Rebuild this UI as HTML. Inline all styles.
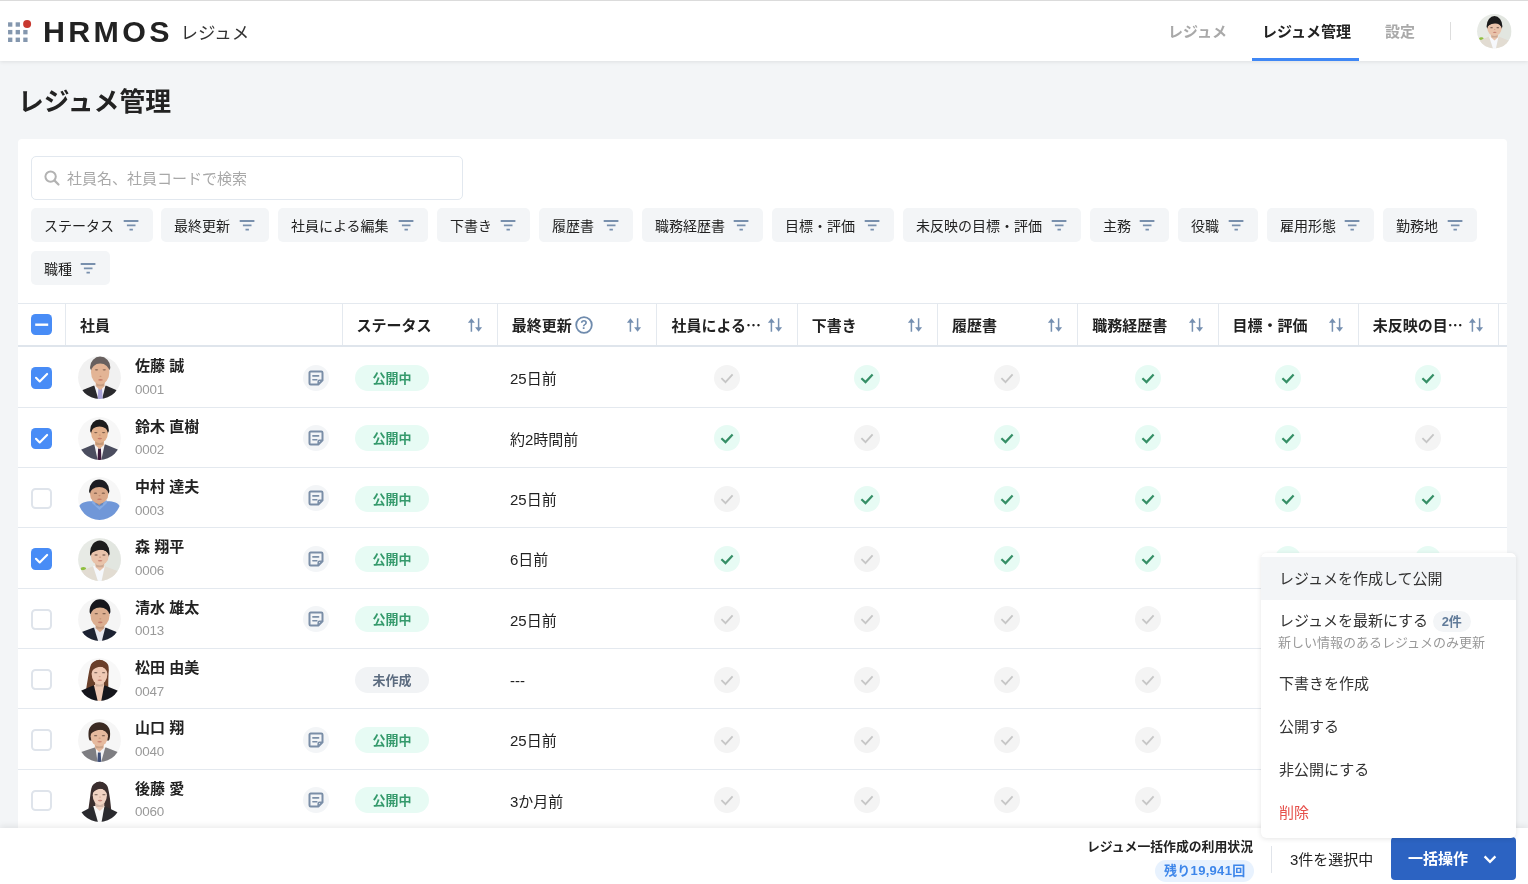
<!DOCTYPE html>
<html lang="ja"><head><meta charset="utf-8"><title>レジュメ管理</title>
<style>
*{box-sizing:border-box;margin:0;padding:0}
html,body{width:1528px;height:884px;overflow:hidden}
body{background:#f3f5f7;font-family:"Liberation Sans","Noto Sans CJK JP",sans-serif;color:#222;position:relative;font-size:15px}
.abs{position:absolute}
#hdr{position:absolute;left:0;top:0;width:1528px;height:61px;background:#fff;border-top:1px solid #dbdbdb;box-shadow:0 1px 4px rgba(0,0,0,.09)}
#logo{position:absolute;left:43.1px;top:12.4px;font-size:30.4px;font-weight:700;letter-spacing:3.3px;color:#222;line-height:36px}
#sub{position:absolute;left:180.5px;top:18.8px;font-size:17.5px;line-height:26px;color:#333}
.nav{position:absolute;top:19.4px;font-size:15px;line-height:24px;font-weight:700;color:#a9a9a9;white-space:nowrap}
.nav.on{color:#222;font-weight:700}
#ul{position:absolute;left:1252px;top:57px;width:107px;height:3px;background:#3f87f5}
#vd{position:absolute;left:1450px;top:21px;width:1px;height:18px;background:#ddd}
h1{position:absolute;left:18px;top:83.6px;font-size:25.8px;line-height:36px;font-weight:700;color:#222;white-space:nowrap}
#card{position:absolute;left:18px;top:139px;width:1489px;height:760px;background:#fff;border-radius:4px}
#search{position:absolute;left:13px;top:17.3px;width:432px;height:43.4px;border:1px solid #e2e8ef;border-radius:5px;background:#fff}
#search span{position:absolute;left:35px;top:9.7px;font-size:15px;line-height:24px;color:#a8a8a8;white-space:nowrap}
#search svg{position:absolute;left:11.3px;top:12.2px}
.chip{position:absolute;height:34.4px;border-radius:5px;background:#f3f5f7;font-size:14px;line-height:36px;color:#222;white-space:nowrap;padding-left:13px}
.chip .fi{position:absolute;right:12.9px;top:8px}
#thead{position:absolute;left:0;top:164px;width:1489px;height:44px;border-top:1px solid #e4e9ef;border-bottom:2px solid #dfe5ec}
.th{position:absolute;top:0;height:41px;border-right:1px solid #e4e9ef;font-weight:700;font-size:15px;line-height:43px;padding-left:14px;white-space:nowrap}
.th .so{position:absolute;right:14px;top:13px}
.row{position:absolute;left:0;width:1489px;height:60.35px;border-bottom:1px solid #e4e9ef}
.cb{position:absolute;left:13px;width:21.4px;height:21.4px;border-radius:4.5px}
.cb.on{background:#488cf6}
.cb.off{background:#fff;border:2px solid #dfe4eb}
.cb svg{position:absolute;left:0;top:0}
.av{position:absolute;left:60.4px;top:9.3px}
.nm{position:absolute;left:117px;top:8px;font-size:15px;font-weight:700;line-height:22px;white-space:nowrap;color:#222}
.cd{position:absolute;left:117px;top:33.7px;font-size:13.4px;letter-spacing:-0.2px;line-height:18px;color:#999}
.nb{position:absolute;left:284.7px;top:17.5px;width:26px;height:26px;border-radius:13px;background:#f3f5f7}
.nb svg{position:absolute;left:4px;top:4px}
.st{position:absolute;left:337px;top:17.7px;width:74px;height:26px;border-radius:13px;font-size:13px;font-weight:700;line-height:27.6px;text-align:center}
.st.g{background:#e7fbf4;color:#359a6c}
.st.n{background:#f1f3f5;color:#5b6b7f}
.lu{position:absolute;left:492px;top:20px;font-size:15px;line-height:24px;white-space:nowrap;color:#222}
.ck{position:absolute;top:17.7px;width:26px;height:26px;border-radius:13px}
.ck svg{position:absolute;left:0;top:0}
.ck.g{background:#e7fbf4}
.ck.x{background:#f4f4f4}
#bar{position:absolute;left:0;top:828px;width:1528px;height:56px;background:#fff;box-shadow:0 -2px 6px rgba(0,0,0,.08)}
#dd{position:absolute;left:1261px;top:552.5px;width:255px;height:285px;background:#fff;border-radius:5px;box-shadow:0 1px 5px rgba(0,0,0,.10),0 0 1px rgba(0,0,0,.05)}
.mi{position:absolute;left:0;width:255px;height:43px;font-size:15px;line-height:44.4px;padding-left:18px;color:#333;white-space:nowrap}
#root{position:absolute;left:0;top:0;width:1528px;height:884px;will-change:transform}
</style></head><body><div id="root">

<div id="hdr">
<svg class="abs" style="left:7px;top:17px" width="26" height="26" viewBox="0 0 26 26"><rect x="1.05" y="4.30" width="4.3" height="4.4" fill="#8497ae"/><rect x="8.65" y="4.30" width="4.3" height="4.4" fill="#8497ae"/><rect x="1.05" y="11.95" width="4.3" height="4.4" fill="#8497ae"/><rect x="8.65" y="11.95" width="4.3" height="4.4" fill="#8497ae"/><rect x="16.25" y="11.95" width="4.3" height="4.4" fill="#8497ae"/><rect x="1.05" y="19.60" width="4.3" height="4.4" fill="#8497ae"/><rect x="8.65" y="19.60" width="4.3" height="4.4" fill="#8497ae"/><rect x="16.25" y="19.60" width="4.3" height="4.4" fill="#8497ae"/><circle cx="20.1" cy="6.05" r="4" fill="#c8382f"/></svg>
<div id="logo">HRMOS</div><div id="sub">レジュメ</div>
<div class="nav" style="left:1168px">レジュメ</div><div class="nav on" style="left:1262px">レジュメ管理</div><div class="nav" style="left:1385px">設定</div>
<div id="ul"></div><div id="vd"></div>
<svg class="abs" style="left:1477px;top:13px" width="34.5" height="34.5" viewBox="0 0 43 43"><defs><clipPath id="cu"><circle cx="21.5" cy="21.5" r="21.4"/></clipPath><filter id="bu" x="-10%" y="-10%" width="120%" height="120%"><feGaussianBlur stdDeviation="0.55"/></filter></defs><g clip-path="url(#cu)"><rect width="43" height="43" fill="#e7eae5"/><g filter="url(#bu)"><ellipse cx="5.4" cy="30.8" rx="2.8" ry="1.7" fill="#8fbf3f"/><rect x="26" y="0" width="17" height="43" fill="#dfe3de" opacity=".6"/><path d="M-2.5 37.5 L3.5 33 L14.2 28.5 L27.6 28.5 L39.5 33 L45.5 37.5 L44 44 L-1 44 Z" fill="#e2dcd2"/><path d="M15 28.0 L26.8 28.0 L23.400000000000002 44 L20.2 44 Z" fill="#f6f8fc"/><path d="M17.200000000000003 21.4 L26.4 21.4 L26.200000000000003 29.0 L21.8 33.0 L17.4 29.0 Z" fill="#e9c3aa"/><path d="M17.200000000000003 24.4 L26.4 24.4 L25.2 29.2 L18.400000000000002 29.2 Z" fill="#000" opacity=".13"/><path d="M13.30 18.5 C11.80 16.5 12.00 16.0 12.00 15.0 A9.8 12.60 0 0 1 31.60 15.0 C31.60 16.0 31.80 16.5 30.30 18.5 Z" fill="#1c1c1c"/><path d="M12.9 17.86 A8.9 6.36 0 0 1 30.700000000000003 17.86 A8.9 9.54 0 0 1 12.9 17.86 Z" fill="#e9c3aa"/><path d="M12.4 15.5 C13.4 7.5 29.200000000000003 6.5 31.200000000000003 16.5 C28.200000000000003 11.0 21.8 9.5 12.4 15.5 Z" fill="#1c1c1c"/><ellipse cx="18.1" cy="17.0" rx="1.7" ry="0.65" fill="#2a1a14" opacity=".55"/><ellipse cx="25.9" cy="17.0" rx="1.7" ry="0.65" fill="#2a1a14" opacity=".55"/><ellipse cx="22.1" cy="22.799999999999997" rx="2.3" ry="0.8" fill="#b0564e" opacity=".6"/><ellipse cx="22.1" cy="19.2" rx="1.1" ry="0.6" fill="#9a5a40" opacity=".35"/></g></g></svg>
</div>
<h1>レジュメ管理</h1>
<div id="card">
<div id="search"><svg width="18" height="18" viewBox="0 0 18 18"><circle cx="7.6" cy="7.6" r="5.2" fill="none" stroke="#b2b2b2" stroke-width="2"/><path d="M11.6 11.6l3.9 3.9" stroke="#b2b2b2" stroke-width="2.2" stroke-linecap="round"/></svg><span>社員名、社員コードで検索</span></div>
<div class="chip" style="left:13px;top:69px;width:122px">ステータス<svg class="fi" viewBox="0 0 18 18" width="18" height="18"><path d="M1.7 5h14.7M4.9 9.4h8.6M7.5 13.6h3.4" fill="none" stroke="#7990ad" stroke-width="1.8"/></svg></div>
<div class="chip" style="left:143px;top:69px;width:108px">最終更新<svg class="fi" viewBox="0 0 18 18" width="18" height="18"><path d="M1.7 5h14.7M4.9 9.4h8.6M7.5 13.6h3.4" fill="none" stroke="#7990ad" stroke-width="1.8"/></svg></div>
<div class="chip" style="left:260px;top:69px;width:150px">社員による編集<svg class="fi" viewBox="0 0 18 18" width="18" height="18"><path d="M1.7 5h14.7M4.9 9.4h8.6M7.5 13.6h3.4" fill="none" stroke="#7990ad" stroke-width="1.8"/></svg></div>
<div class="chip" style="left:419px;top:69px;width:93px">下書き<svg class="fi" viewBox="0 0 18 18" width="18" height="18"><path d="M1.7 5h14.7M4.9 9.4h8.6M7.5 13.6h3.4" fill="none" stroke="#7990ad" stroke-width="1.8"/></svg></div>
<div class="chip" style="left:521px;top:69px;width:94px">履歴書<svg class="fi" viewBox="0 0 18 18" width="18" height="18"><path d="M1.7 5h14.7M4.9 9.4h8.6M7.5 13.6h3.4" fill="none" stroke="#7990ad" stroke-width="1.8"/></svg></div>
<div class="chip" style="left:624px;top:69px;width:121px">職務経歴書<svg class="fi" viewBox="0 0 18 18" width="18" height="18"><path d="M1.7 5h14.7M4.9 9.4h8.6M7.5 13.6h3.4" fill="none" stroke="#7990ad" stroke-width="1.8"/></svg></div>
<div class="chip" style="left:754px;top:69px;width:122px">目標・評価<svg class="fi" viewBox="0 0 18 18" width="18" height="18"><path d="M1.7 5h14.7M4.9 9.4h8.6M7.5 13.6h3.4" fill="none" stroke="#7990ad" stroke-width="1.8"/></svg></div>
<div class="chip" style="left:885px;top:69px;width:178px">未反映の目標・評価<svg class="fi" viewBox="0 0 18 18" width="18" height="18"><path d="M1.7 5h14.7M4.9 9.4h8.6M7.5 13.6h3.4" fill="none" stroke="#7990ad" stroke-width="1.8"/></svg></div>
<div class="chip" style="left:1072px;top:69px;width:79px">主務<svg class="fi" viewBox="0 0 18 18" width="18" height="18"><path d="M1.7 5h14.7M4.9 9.4h8.6M7.5 13.6h3.4" fill="none" stroke="#7990ad" stroke-width="1.8"/></svg></div>
<div class="chip" style="left:1160px;top:69px;width:80px">役職<svg class="fi" viewBox="0 0 18 18" width="18" height="18"><path d="M1.7 5h14.7M4.9 9.4h8.6M7.5 13.6h3.4" fill="none" stroke="#7990ad" stroke-width="1.8"/></svg></div>
<div class="chip" style="left:1249px;top:69px;width:107px">雇用形態<svg class="fi" viewBox="0 0 18 18" width="18" height="18"><path d="M1.7 5h14.7M4.9 9.4h8.6M7.5 13.6h3.4" fill="none" stroke="#7990ad" stroke-width="1.8"/></svg></div>
<div class="chip" style="left:1365px;top:69px;width:94px">勤務地<svg class="fi" viewBox="0 0 18 18" width="18" height="18"><path d="M1.7 5h14.7M4.9 9.4h8.6M7.5 13.6h3.4" fill="none" stroke="#7990ad" stroke-width="1.8"/></svg></div>
<div class="chip" style="left:13px;top:112px;width:79px">職種<svg class="fi" viewBox="0 0 18 18" width="18" height="18"><path d="M1.7 5h14.7M4.9 9.4h8.6M7.5 13.6h3.4" fill="none" stroke="#7990ad" stroke-width="1.8"/></svg></div>
<div id="thead">
<div class="th" style="left:0px;width:48px"><div class="cb on" style="top:10px"><svg width="21" height="21" viewBox="0 0 21 21"><path d="M4.2 10.7h13" stroke="#fff" stroke-width="2.4"/></svg></div></div>
<div class="th" style="left:48px;width:276.5px">社員</div>
<div class="th" style="left:324.5px;width:155.2px">ステータス<svg class="so" viewBox="0 0 16 16" width="16" height="16"><path d="M4.4 14.7V3.4M11.6 1.3v11.3" fill="none" stroke="#7690b1" stroke-width="1.5"/><path d="M0.9 5.8l3.5-4.5 3.5 4.5zM8.1 10.2l3.5 4.5 3.5-4.5z" fill="#7690b1"/></svg></div>
<div class="th" style="left:479.7px;width:159.8px">最終更新<svg class="abs" style="left:77.5px;top:11.6px" width="18" height="18" viewBox="0 0 18 18"><circle cx="9" cy="9" r="7.8" fill="none" stroke="#6f8bad" stroke-width="1.8"/><text x="9" y="13.2" text-anchor="middle" font-family="Liberation Sans, sans-serif" font-size="12" font-weight="700" fill="#6f8bad">?</text></svg><svg class="so" viewBox="0 0 16 16" width="16" height="16"><path d="M4.4 14.7V3.4M11.6 1.3v11.3" fill="none" stroke="#7690b1" stroke-width="1.5"/><path d="M0.9 5.8l3.5-4.5 3.5 4.5zM8.1 10.2l3.5 4.5 3.5-4.5z" fill="#7690b1"/></svg></div>
<div class="th" style="left:639.5px;width:140.25px">社員による⋯<svg class="so" viewBox="0 0 16 16" width="16" height="16"><path d="M4.4 14.7V3.4M11.6 1.3v11.3" fill="none" stroke="#7690b1" stroke-width="1.5"/><path d="M0.9 5.8l3.5-4.5 3.5 4.5zM8.1 10.2l3.5 4.5 3.5-4.5z" fill="#7690b1"/></svg></div>
<div class="th" style="left:779.75px;width:140.25px">下書き<svg class="so" viewBox="0 0 16 16" width="16" height="16"><path d="M4.4 14.7V3.4M11.6 1.3v11.3" fill="none" stroke="#7690b1" stroke-width="1.5"/><path d="M0.9 5.8l3.5-4.5 3.5 4.5zM8.1 10.2l3.5 4.5 3.5-4.5z" fill="#7690b1"/></svg></div>
<div class="th" style="left:920.0px;width:140.25px">履歴書<svg class="so" viewBox="0 0 16 16" width="16" height="16"><path d="M4.4 14.7V3.4M11.6 1.3v11.3" fill="none" stroke="#7690b1" stroke-width="1.5"/><path d="M0.9 5.8l3.5-4.5 3.5 4.5zM8.1 10.2l3.5 4.5 3.5-4.5z" fill="#7690b1"/></svg></div>
<div class="th" style="left:1060.25px;width:140.25px">職務経歴書<svg class="so" viewBox="0 0 16 16" width="16" height="16"><path d="M4.4 14.7V3.4M11.6 1.3v11.3" fill="none" stroke="#7690b1" stroke-width="1.5"/><path d="M0.9 5.8l3.5-4.5 3.5 4.5zM8.1 10.2l3.5 4.5 3.5-4.5z" fill="#7690b1"/></svg></div>
<div class="th" style="left:1200.5px;width:140.25px">目標・評価<svg class="so" viewBox="0 0 16 16" width="16" height="16"><path d="M4.4 14.7V3.4M11.6 1.3v11.3" fill="none" stroke="#7690b1" stroke-width="1.5"/><path d="M0.9 5.8l3.5-4.5 3.5 4.5zM8.1 10.2l3.5 4.5 3.5-4.5z" fill="#7690b1"/></svg></div>
<div class="th" style="left:1340.75px;width:140.25px">未反映の目⋯<svg class="so" viewBox="0 0 16 16" width="16" height="16"><path d="M4.4 14.7V3.4M11.6 1.3v11.3" fill="none" stroke="#7690b1" stroke-width="1.5"/><path d="M0.9 5.8l3.5-4.5 3.5 4.5zM8.1 10.2l3.5 4.5 3.5-4.5z" fill="#7690b1"/></svg></div>
</div>
<div class="row" style="top:208.20px">
<div class="cb on" style="top:20px"><svg width="21" height="21" viewBox="0 0 21 21"><path d="M5 10.8l3.7 3.7 7.4-7.6" fill="none" stroke="#fff" stroke-width="2.1" stroke-linecap="round" stroke-linejoin="round"/></svg></div>
<svg class="av" viewBox="0 0 43 43" width="43" height="43"><defs><clipPath id="c0"><circle cx="21.5" cy="21.5" r="21.4"/></clipPath><filter id="b0" x="-10%" y="-10%" width="120%" height="120%"><feGaussianBlur stdDeviation="0.55"/></filter></defs><g clip-path="url(#c0)"><rect width="43" height="43" fill="#f1f1f1"/><g filter="url(#b0)"><path d="M-0.7000000000000002 38.3 L5.3 33.8 L15.399999999999999 29.7 L28.400000000000002 29.7 L37.6 33.8 L43.6 38.3 L44 44 L-1 44 Z" fill="#29292f"/><path d="M16.2 29.2 L27.6 29.2 L23.8 44 L20.599999999999998 44 Z" fill="#f2f2f6"/><path d="M20.38 32 L24.02 32 L24.8 44 L19.599999999999998 44 Z" fill="#a8a2d6"/><path d="M17.6 22.5 L26.799999999999997 22.5 L26.6 30.2 L22.2 34.2 L17.799999999999997 30.2 Z" fill="#e3b495"/><path d="M17.6 25.5 L26.799999999999997 25.5 L25.599999999999998 30.3 L18.8 30.3 Z" fill="#000" opacity=".13"/><path d="M13.40 14.6 C11.90 12.6 12.10 12.1 12.10 11.1 A10.1 10.50 0 0 1 32.30 11.1 C32.30 12.1 32.50 12.6 31.00 14.6 Z" fill="#67615e"/><path d="M13.0 15.96 A9.2 8.36 0 0 1 31.4 15.96 A9.2 12.54 0 0 1 13.0 15.96 Z" fill="#e3b495"/><ellipse cx="18.5" cy="13.8" rx="1.7" ry="0.65" fill="#2a1a14" opacity=".55"/><ellipse cx="26.299999999999997" cy="13.8" rx="1.7" ry="0.65" fill="#2a1a14" opacity=".55"/><ellipse cx="22.5" cy="23.9" rx="2.3" ry="0.8" fill="#b0564e" opacity=".6"/><ellipse cx="22.5" cy="20.3" rx="1.1" ry="0.6" fill="#9a5a40" opacity=".35"/></g></g></svg>
<div class="nm">佐藤 誠</div><div class="cd">0001</div>
<div class="nb"><svg viewBox="0 0 18 18" width="18" height="18"><path d="M2.5 3.7a1.2 1.2 0 0 1 1.2-1.2h10.6a1.2 1.2 0 0 1 1.2 1.2v7.6l-4.2 4.2H3.7a1.2 1.2 0 0 1-1.2-1.2z" fill="none" stroke="#7a8ea7" stroke-width="2" stroke-linejoin="round"/><path d="M5.9 6.9h5.7M5.9 10.7h3.9" stroke="#7a8ea7" stroke-width="1.6" fill="none" stroke-linecap="round"/><path d="M11.2 15.4v-3a1.2 1.2 0 0 1 1.2-1.2h3" fill="none" stroke="#7a8ea7" stroke-width="1.6"/></svg></div>
<div class="st g">公開中</div>
<div class="lu">25日前</div>
<div class="ck x" style="left:695.9px"><svg viewBox="0 0 26 26" width="26" height="26"><path d="M7.4 13.2l4.1 3.9 7.1-7.7" fill="none" stroke="#c6c6c6" stroke-width="1.8"/></svg></div>
<div class="ck g" style="left:836.15px"><svg viewBox="0 0 26 26" width="26" height="26"><path d="M7.4 13.2l4.1 3.9 7.1-7.7" fill="none" stroke="#358f66" stroke-width="2.2"/></svg></div>
<div class="ck x" style="left:976.4px"><svg viewBox="0 0 26 26" width="26" height="26"><path d="M7.4 13.2l4.1 3.9 7.1-7.7" fill="none" stroke="#c6c6c6" stroke-width="1.8"/></svg></div>
<div class="ck g" style="left:1116.65px"><svg viewBox="0 0 26 26" width="26" height="26"><path d="M7.4 13.2l4.1 3.9 7.1-7.7" fill="none" stroke="#358f66" stroke-width="2.2"/></svg></div>
<div class="ck g" style="left:1256.9px"><svg viewBox="0 0 26 26" width="26" height="26"><path d="M7.4 13.2l4.1 3.9 7.1-7.7" fill="none" stroke="#358f66" stroke-width="2.2"/></svg></div>
<div class="ck g" style="left:1397.15px"><svg viewBox="0 0 26 26" width="26" height="26"><path d="M7.4 13.2l4.1 3.9 7.1-7.7" fill="none" stroke="#358f66" stroke-width="2.2"/></svg></div>
</div>
<div class="row" style="top:268.55px">
<div class="cb on" style="top:20px"><svg width="21" height="21" viewBox="0 0 21 21"><path d="M5 10.8l3.7 3.7 7.4-7.6" fill="none" stroke="#fff" stroke-width="2.1" stroke-linecap="round" stroke-linejoin="round"/></svg></div>
<svg class="av" viewBox="0 0 43 43" width="43" height="43"><defs><clipPath id="c1"><circle cx="21.5" cy="21.5" r="21.4"/></clipPath><filter id="b1" x="-10%" y="-10%" width="120%" height="120%"><feGaussianBlur stdDeviation="0.55"/></filter></defs><g clip-path="url(#c1)"><rect width="43" height="43" fill="#f7f7f7"/><g filter="url(#b1)"><path d="M-2.5 37.1 L3.5 32.6 L15.399999999999999 27.4 L27.6 27.4 L39.7 32.6 L45.7 37.1 L44 44 L-1 44 Z" fill="#4b4e5e"/><path d="M16.2 26.9 L26.8 26.9 L23.1 44 L19.9 44 Z" fill="#f4f2f4"/><path d="M20.1 31.5 L22.9 31.5 L23.5 44 L19.5 44 Z" fill="#3c1a3c"/><path d="M16.9 20.2 L26.1 20.2 L25.9 27.9 L21.5 31.9 L17.1 27.9 Z" fill="#e2b08c"/><path d="M16.9 23.2 L26.1 23.2 L24.9 28.0 L18.1 28.0 Z" fill="#000" opacity=".13"/><path d="M13.50 16.4 C12.00 14.399999999999999 12.20 13.9 12.20 12.9 A9.3 10.50 0 0 1 30.80 12.9 C30.80 13.9 31.00 14.399999999999999 29.50 16.4 Z" fill="#1c1a1a"/><path d="M13.1 16.12 A8.4 6.72 0 0 1 29.9 16.12 A8.4 10.08 0 0 1 13.1 16.12 Z" fill="#e2b08c"/><ellipse cx="17.8" cy="15.600000000000001" rx="1.7" ry="0.65" fill="#2a1a14" opacity=".55"/><ellipse cx="25.6" cy="15.600000000000001" rx="1.7" ry="0.65" fill="#2a1a14" opacity=".55"/><ellipse cx="21.8" cy="21.6" rx="2.3" ry="0.8" fill="#b0564e" opacity=".6"/><ellipse cx="21.8" cy="18.0" rx="1.1" ry="0.6" fill="#9a5a40" opacity=".35"/></g></g></svg>
<div class="nm">鈴木 直樹</div><div class="cd">0002</div>
<div class="nb"><svg viewBox="0 0 18 18" width="18" height="18"><path d="M2.5 3.7a1.2 1.2 0 0 1 1.2-1.2h10.6a1.2 1.2 0 0 1 1.2 1.2v7.6l-4.2 4.2H3.7a1.2 1.2 0 0 1-1.2-1.2z" fill="none" stroke="#7a8ea7" stroke-width="2" stroke-linejoin="round"/><path d="M5.9 6.9h5.7M5.9 10.7h3.9" stroke="#7a8ea7" stroke-width="1.6" fill="none" stroke-linecap="round"/><path d="M11.2 15.4v-3a1.2 1.2 0 0 1 1.2-1.2h3" fill="none" stroke="#7a8ea7" stroke-width="1.6"/></svg></div>
<div class="st g">公開中</div>
<div class="lu">約2時間前</div>
<div class="ck g" style="left:695.9px"><svg viewBox="0 0 26 26" width="26" height="26"><path d="M7.4 13.2l4.1 3.9 7.1-7.7" fill="none" stroke="#358f66" stroke-width="2.2"/></svg></div>
<div class="ck x" style="left:836.15px"><svg viewBox="0 0 26 26" width="26" height="26"><path d="M7.4 13.2l4.1 3.9 7.1-7.7" fill="none" stroke="#c6c6c6" stroke-width="1.8"/></svg></div>
<div class="ck g" style="left:976.4px"><svg viewBox="0 0 26 26" width="26" height="26"><path d="M7.4 13.2l4.1 3.9 7.1-7.7" fill="none" stroke="#358f66" stroke-width="2.2"/></svg></div>
<div class="ck g" style="left:1116.65px"><svg viewBox="0 0 26 26" width="26" height="26"><path d="M7.4 13.2l4.1 3.9 7.1-7.7" fill="none" stroke="#358f66" stroke-width="2.2"/></svg></div>
<div class="ck g" style="left:1256.9px"><svg viewBox="0 0 26 26" width="26" height="26"><path d="M7.4 13.2l4.1 3.9 7.1-7.7" fill="none" stroke="#358f66" stroke-width="2.2"/></svg></div>
<div class="ck x" style="left:1397.15px"><svg viewBox="0 0 26 26" width="26" height="26"><path d="M7.4 13.2l4.1 3.9 7.1-7.7" fill="none" stroke="#c6c6c6" stroke-width="1.8"/></svg></div>
</div>
<div class="row" style="top:328.90px">
<div class="cb off" style="top:20px"></div>
<svg class="av" viewBox="0 0 43 43" width="43" height="43"><defs><clipPath id="c2"><circle cx="21.5" cy="21.5" r="21.4"/></clipPath><filter id="b2" x="-10%" y="-10%" width="120%" height="120%"><feGaussianBlur stdDeviation="0.55"/></filter></defs><g clip-path="url(#c2)"><rect width="43" height="43" fill="#f7f7f7"/><g filter="url(#b2)"><path d="M0 31 C3 24.5 9 24 15 24.2 L28 24.2 C34 24 40 24.5 43 31 L44 44 L-1 44 Z" fill="#6f97d8"/><path d="M14 23 L21.5 30 L29 23 L29 26 L21.6 33 L14 26 Z" fill="#86abe4"/><path d="M16.6 20.8 L25.799999999999997 20.8 L25.6 24.5 L21.2 28.5 L16.799999999999997 24.5 Z" fill="#dba98a"/><path d="M16.6 23.8 L25.799999999999997 23.8 L24.599999999999998 28.6 L17.8 28.6 Z" fill="#000" opacity=".13"/><path d="M12.40 17 C10.90 15 11.10 14.5 11.10 13.5 A10.1 11.10 0 0 1 31.30 13.5 C31.30 14.5 31.50 15 30.00 17 Z" fill="#1e1e20"/><path d="M12.0 16.72 A9.2 6.72 0 0 1 30.4 16.72 A9.2 10.08 0 0 1 12.0 16.72 Z" fill="#dba98a"/><ellipse cx="17.5" cy="16.2" rx="1.7" ry="0.65" fill="#2a1a14" opacity=".55"/><ellipse cx="25.299999999999997" cy="16.2" rx="1.7" ry="0.65" fill="#2a1a14" opacity=".55"/><ellipse cx="21.5" cy="22.200000000000003" rx="2.3" ry="0.8" fill="#b0564e" opacity=".6"/><ellipse cx="21.5" cy="18.6" rx="1.1" ry="0.6" fill="#9a5a40" opacity=".35"/></g></g></svg>
<div class="nm">中村 達夫</div><div class="cd">0003</div>
<div class="nb"><svg viewBox="0 0 18 18" width="18" height="18"><path d="M2.5 3.7a1.2 1.2 0 0 1 1.2-1.2h10.6a1.2 1.2 0 0 1 1.2 1.2v7.6l-4.2 4.2H3.7a1.2 1.2 0 0 1-1.2-1.2z" fill="none" stroke="#7a8ea7" stroke-width="2" stroke-linejoin="round"/><path d="M5.9 6.9h5.7M5.9 10.7h3.9" stroke="#7a8ea7" stroke-width="1.6" fill="none" stroke-linecap="round"/><path d="M11.2 15.4v-3a1.2 1.2 0 0 1 1.2-1.2h3" fill="none" stroke="#7a8ea7" stroke-width="1.6"/></svg></div>
<div class="st g">公開中</div>
<div class="lu">25日前</div>
<div class="ck x" style="left:695.9px"><svg viewBox="0 0 26 26" width="26" height="26"><path d="M7.4 13.2l4.1 3.9 7.1-7.7" fill="none" stroke="#c6c6c6" stroke-width="1.8"/></svg></div>
<div class="ck g" style="left:836.15px"><svg viewBox="0 0 26 26" width="26" height="26"><path d="M7.4 13.2l4.1 3.9 7.1-7.7" fill="none" stroke="#358f66" stroke-width="2.2"/></svg></div>
<div class="ck g" style="left:976.4px"><svg viewBox="0 0 26 26" width="26" height="26"><path d="M7.4 13.2l4.1 3.9 7.1-7.7" fill="none" stroke="#358f66" stroke-width="2.2"/></svg></div>
<div class="ck g" style="left:1116.65px"><svg viewBox="0 0 26 26" width="26" height="26"><path d="M7.4 13.2l4.1 3.9 7.1-7.7" fill="none" stroke="#358f66" stroke-width="2.2"/></svg></div>
<div class="ck g" style="left:1256.9px"><svg viewBox="0 0 26 26" width="26" height="26"><path d="M7.4 13.2l4.1 3.9 7.1-7.7" fill="none" stroke="#358f66" stroke-width="2.2"/></svg></div>
<div class="ck g" style="left:1397.15px"><svg viewBox="0 0 26 26" width="26" height="26"><path d="M7.4 13.2l4.1 3.9 7.1-7.7" fill="none" stroke="#358f66" stroke-width="2.2"/></svg></div>
</div>
<div class="row" style="top:389.25px">
<div class="cb on" style="top:20px"><svg width="21" height="21" viewBox="0 0 21 21"><path d="M5 10.8l3.7 3.7 7.4-7.6" fill="none" stroke="#fff" stroke-width="2.1" stroke-linecap="round" stroke-linejoin="round"/></svg></div>
<svg class="av" viewBox="0 0 43 43" width="43" height="43"><defs><clipPath id="c3"><circle cx="21.5" cy="21.5" r="21.4"/></clipPath><filter id="b3" x="-10%" y="-10%" width="120%" height="120%"><feGaussianBlur stdDeviation="0.55"/></filter></defs><g clip-path="url(#c3)"><rect width="43" height="43" fill="#e7eae5"/><g filter="url(#b3)"><ellipse cx="5.4" cy="30.8" rx="2.8" ry="1.7" fill="#8fbf3f"/><rect x="26" y="0" width="17" height="43" fill="#dfe3de" opacity=".6"/><path d="M-2.5 37.5 L3.5 33 L14.2 28.5 L27.6 28.5 L39.5 33 L45.5 37.5 L44 44 L-1 44 Z" fill="#e2dcd2"/><path d="M15 28.0 L26.8 28.0 L23.400000000000002 44 L20.2 44 Z" fill="#f6f8fc"/><path d="M17.200000000000003 21.4 L26.4 21.4 L26.200000000000003 29.0 L21.8 33.0 L17.4 29.0 Z" fill="#e9c3aa"/><path d="M17.200000000000003 24.4 L26.4 24.4 L25.2 29.2 L18.400000000000002 29.2 Z" fill="#000" opacity=".13"/><path d="M13.30 18.5 C11.80 16.5 12.00 16.0 12.00 15.0 A9.8 12.60 0 0 1 31.60 15.0 C31.60 16.0 31.80 16.5 30.30 18.5 Z" fill="#1c1c1c"/><path d="M12.9 17.86 A8.9 6.36 0 0 1 30.700000000000003 17.86 A8.9 9.54 0 0 1 12.9 17.86 Z" fill="#e9c3aa"/><path d="M12.4 15.5 C13.4 7.5 29.200000000000003 6.5 31.200000000000003 16.5 C28.200000000000003 11.0 21.8 9.5 12.4 15.5 Z" fill="#1c1c1c"/><ellipse cx="18.1" cy="17.0" rx="1.7" ry="0.65" fill="#2a1a14" opacity=".55"/><ellipse cx="25.9" cy="17.0" rx="1.7" ry="0.65" fill="#2a1a14" opacity=".55"/><ellipse cx="22.1" cy="22.799999999999997" rx="2.3" ry="0.8" fill="#b0564e" opacity=".6"/><ellipse cx="22.1" cy="19.2" rx="1.1" ry="0.6" fill="#9a5a40" opacity=".35"/></g></g></svg>
<div class="nm">森 翔平</div><div class="cd">0006</div>
<div class="nb"><svg viewBox="0 0 18 18" width="18" height="18"><path d="M2.5 3.7a1.2 1.2 0 0 1 1.2-1.2h10.6a1.2 1.2 0 0 1 1.2 1.2v7.6l-4.2 4.2H3.7a1.2 1.2 0 0 1-1.2-1.2z" fill="none" stroke="#7a8ea7" stroke-width="2" stroke-linejoin="round"/><path d="M5.9 6.9h5.7M5.9 10.7h3.9" stroke="#7a8ea7" stroke-width="1.6" fill="none" stroke-linecap="round"/><path d="M11.2 15.4v-3a1.2 1.2 0 0 1 1.2-1.2h3" fill="none" stroke="#7a8ea7" stroke-width="1.6"/></svg></div>
<div class="st g">公開中</div>
<div class="lu">6日前</div>
<div class="ck g" style="left:695.9px"><svg viewBox="0 0 26 26" width="26" height="26"><path d="M7.4 13.2l4.1 3.9 7.1-7.7" fill="none" stroke="#358f66" stroke-width="2.2"/></svg></div>
<div class="ck x" style="left:836.15px"><svg viewBox="0 0 26 26" width="26" height="26"><path d="M7.4 13.2l4.1 3.9 7.1-7.7" fill="none" stroke="#c6c6c6" stroke-width="1.8"/></svg></div>
<div class="ck g" style="left:976.4px"><svg viewBox="0 0 26 26" width="26" height="26"><path d="M7.4 13.2l4.1 3.9 7.1-7.7" fill="none" stroke="#358f66" stroke-width="2.2"/></svg></div>
<div class="ck g" style="left:1116.65px"><svg viewBox="0 0 26 26" width="26" height="26"><path d="M7.4 13.2l4.1 3.9 7.1-7.7" fill="none" stroke="#358f66" stroke-width="2.2"/></svg></div>
<div class="ck g" style="left:1256.9px"><svg viewBox="0 0 26 26" width="26" height="26"><path d="M7.4 13.2l4.1 3.9 7.1-7.7" fill="none" stroke="#358f66" stroke-width="2.2"/></svg></div>
<div class="ck g" style="left:1397.15px"><svg viewBox="0 0 26 26" width="26" height="26"><path d="M7.4 13.2l4.1 3.9 7.1-7.7" fill="none" stroke="#358f66" stroke-width="2.2"/></svg></div>
</div>
<div class="row" style="top:449.60px">
<div class="cb off" style="top:20px"></div>
<svg class="av" viewBox="0 0 43 43" width="43" height="43"><defs><clipPath id="c4"><circle cx="21.5" cy="21.5" r="21.4"/></clipPath><filter id="b4" x="-10%" y="-10%" width="120%" height="120%"><feGaussianBlur stdDeviation="0.55"/></filter></defs><g clip-path="url(#c4)"><rect width="43" height="43" fill="#f5f5f5"/><g filter="url(#b4)"><path d="M-1.5999999999999996 38.3 L4.4 33.8 L15.1 29.7 L28.2 29.7 L38 33.8 L44 38.3 L44 44 L-1 44 Z" fill="#1c2230"/><path d="M15.9 29.2 L27.4 29.2 L23.6 44 L20.4 44 Z" fill="#e6e8f0"/><path d="M17.4 23 L26.6 23 L26.4 30.2 L22 34.2 L17.6 30.2 Z" fill="#dcae90"/><path d="M17.4 26 L26.6 26 L25.4 30.8 L18.6 30.8 Z" fill="#000" opacity=".13"/><path d="M12.90 16.5 C11.40 14.5 11.60 14.0 11.60 13.0 A10.4 11.80 0 0 1 32.40 13.0 C32.40 14.0 32.60 14.5 31.10 16.5 Z" fill="#16181c"/><path d="M12.5 17.30 A9.5 7.80 0 0 1 31.5 17.30 A9.5 11.70 0 0 1 12.5 17.30 Z" fill="#dcae90"/><ellipse cx="18.3" cy="15.7" rx="1.7" ry="0.65" fill="#2a1a14" opacity=".55"/><ellipse cx="26.1" cy="15.7" rx="1.7" ry="0.65" fill="#2a1a14" opacity=".55"/><ellipse cx="22.3" cy="24.4" rx="2.3" ry="0.8" fill="#b0564e" opacity=".6"/><ellipse cx="22.3" cy="20.8" rx="1.1" ry="0.6" fill="#9a5a40" opacity=".35"/></g></g></svg>
<div class="nm">清水 雄太</div><div class="cd">0013</div>
<div class="nb"><svg viewBox="0 0 18 18" width="18" height="18"><path d="M2.5 3.7a1.2 1.2 0 0 1 1.2-1.2h10.6a1.2 1.2 0 0 1 1.2 1.2v7.6l-4.2 4.2H3.7a1.2 1.2 0 0 1-1.2-1.2z" fill="none" stroke="#7a8ea7" stroke-width="2" stroke-linejoin="round"/><path d="M5.9 6.9h5.7M5.9 10.7h3.9" stroke="#7a8ea7" stroke-width="1.6" fill="none" stroke-linecap="round"/><path d="M11.2 15.4v-3a1.2 1.2 0 0 1 1.2-1.2h3" fill="none" stroke="#7a8ea7" stroke-width="1.6"/></svg></div>
<div class="st g">公開中</div>
<div class="lu">25日前</div>
<div class="ck x" style="left:695.9px"><svg viewBox="0 0 26 26" width="26" height="26"><path d="M7.4 13.2l4.1 3.9 7.1-7.7" fill="none" stroke="#c6c6c6" stroke-width="1.8"/></svg></div>
<div class="ck x" style="left:836.15px"><svg viewBox="0 0 26 26" width="26" height="26"><path d="M7.4 13.2l4.1 3.9 7.1-7.7" fill="none" stroke="#c6c6c6" stroke-width="1.8"/></svg></div>
<div class="ck x" style="left:976.4px"><svg viewBox="0 0 26 26" width="26" height="26"><path d="M7.4 13.2l4.1 3.9 7.1-7.7" fill="none" stroke="#c6c6c6" stroke-width="1.8"/></svg></div>
<div class="ck x" style="left:1116.65px"><svg viewBox="0 0 26 26" width="26" height="26"><path d="M7.4 13.2l4.1 3.9 7.1-7.7" fill="none" stroke="#c6c6c6" stroke-width="1.8"/></svg></div>
<div class="ck x" style="left:1256.9px"><svg viewBox="0 0 26 26" width="26" height="26"><path d="M7.4 13.2l4.1 3.9 7.1-7.7" fill="none" stroke="#c6c6c6" stroke-width="1.8"/></svg></div>
<div class="ck x" style="left:1397.15px"><svg viewBox="0 0 26 26" width="26" height="26"><path d="M7.4 13.2l4.1 3.9 7.1-7.7" fill="none" stroke="#c6c6c6" stroke-width="1.8"/></svg></div>
</div>
<div class="row" style="top:509.95px">
<div class="cb off" style="top:20px"></div>
<svg class="av" viewBox="0 0 43 43" width="43" height="43"><defs><clipPath id="c5"><circle cx="21.5" cy="21.5" r="21.4"/></clipPath><filter id="b5" x="-10%" y="-10%" width="120%" height="120%"><feGaussianBlur stdDeviation="0.55"/></filter></defs><g clip-path="url(#c5)"><rect width="43" height="43" fill="#f8f8f8"/><g filter="url(#b5)"><path d="M8.2 31 C10.2 19 11.6 9.8 12.6 7.8 C14.1 0.30000000000000004 28.9 0.30000000000000004 30.4 7.8 C31.4 11.8 29.6 21 30.6 33 Z" fill="#6b3f2a"/><path d="M-2.5 37.1 L3.5 32.6 L15.1 27.4 L27.0 27.4 L39.4 32.6 L45.4 37.1 L44 44 L-1 44 Z" fill="#15151a"/><path d="M15.9 26.9 L26.2 26.9 L23.1 44 L19.9 44 Z" fill="#efc9b4"/><path d="M16.9 20.8 L26.1 20.8 L25.9 27.9 L21.5 31.9 L17.1 27.9 Z" fill="#efc9b4"/><path d="M16.9 23.8 L26.1 23.8 L24.9 28.6 L18.1 28.6 Z" fill="#000" opacity=".13"/><path d="M14.00 15.5 C12.50 13.5 12.70 13.0 12.70 12.0 A8.8 10.20 0 0 1 30.30 12.0 C30.30 13.0 30.50 13.5 29.00 15.5 Z" fill="#6b3f2a"/><path d="M13.6 15.82 A7.9 7.32 0 0 1 29.4 15.82 A7.9 10.98 0 0 1 13.6 15.82 Z" fill="#efc9b4"/><path d="M13.1 12.5 C14.1 4.5 27.9 3.5 29.9 13.5 C26.9 8.0 21.5 6.5 13.1 12.5 Z" fill="#6b3f2a"/><ellipse cx="17.8" cy="14.7" rx="1.7" ry="0.65" fill="#2a1a14" opacity=".55"/><ellipse cx="25.6" cy="14.7" rx="1.7" ry="0.65" fill="#2a1a14" opacity=".55"/><ellipse cx="21.8" cy="22.200000000000003" rx="2.3" ry="0.8" fill="#b0564e" opacity=".6"/><ellipse cx="21.8" cy="18.6" rx="1.1" ry="0.6" fill="#9a5a40" opacity=".35"/></g></g></svg>
<div class="nm">松田 由美</div><div class="cd">0047</div>
<div class="st n">未作成</div>
<div class="lu">---</div>
<div class="ck x" style="left:695.9px"><svg viewBox="0 0 26 26" width="26" height="26"><path d="M7.4 13.2l4.1 3.9 7.1-7.7" fill="none" stroke="#c6c6c6" stroke-width="1.8"/></svg></div>
<div class="ck x" style="left:836.15px"><svg viewBox="0 0 26 26" width="26" height="26"><path d="M7.4 13.2l4.1 3.9 7.1-7.7" fill="none" stroke="#c6c6c6" stroke-width="1.8"/></svg></div>
<div class="ck x" style="left:976.4px"><svg viewBox="0 0 26 26" width="26" height="26"><path d="M7.4 13.2l4.1 3.9 7.1-7.7" fill="none" stroke="#c6c6c6" stroke-width="1.8"/></svg></div>
<div class="ck x" style="left:1116.65px"><svg viewBox="0 0 26 26" width="26" height="26"><path d="M7.4 13.2l4.1 3.9 7.1-7.7" fill="none" stroke="#c6c6c6" stroke-width="1.8"/></svg></div>
<div class="ck x" style="left:1256.9px"><svg viewBox="0 0 26 26" width="26" height="26"><path d="M7.4 13.2l4.1 3.9 7.1-7.7" fill="none" stroke="#c6c6c6" stroke-width="1.8"/></svg></div>
<div class="ck x" style="left:1397.15px"><svg viewBox="0 0 26 26" width="26" height="26"><path d="M7.4 13.2l4.1 3.9 7.1-7.7" fill="none" stroke="#c6c6c6" stroke-width="1.8"/></svg></div>
</div>
<div class="row" style="top:570.30px">
<div class="cb off" style="top:20px"></div>
<svg class="av" viewBox="0 0 43 43" width="43" height="43"><defs><clipPath id="c6"><circle cx="21.5" cy="21.5" r="21.4"/></clipPath><filter id="b6" x="-10%" y="-10%" width="120%" height="120%"><feGaussianBlur stdDeviation="0.55"/></filter></defs><g clip-path="url(#c6)"><rect width="43" height="43" fill="#f6f6f6"/><g filter="url(#b6)"><path d="M-2.8 37.5 L3.2 33 L16.599999999999998 28.5 L28.2 28.5 L39.7 33 L45.7 37.5 L44 44 L-1 44 Z" fill="#7e7e82"/><path d="M17.4 28.0 L27.4 28.0 L22.900000000000002 44 L19.7 44 Z" fill="#f4f4f4"/><path d="M19.900000000000002 33.5 L22.7 33.5 L23.3 44 L19.3 44 Z" fill="#3f5078"/><path d="M16.700000000000003 21.4 L25.9 21.4 L25.700000000000003 29.0 L21.3 33.0 L16.9 29.0 Z" fill="#e6ba9e"/><path d="M16.700000000000003 24.4 L25.9 24.4 L24.7 29.2 L17.900000000000002 29.2 Z" fill="#000" opacity=".13"/><path d="M11.80 21.5 C10.30 19.5 10.50 15.0 10.50 14.0 A10.799999999999999 10.80 0 0 1 32.10 14.0 C32.10 15.0 32.30 19.5 30.80 21.5 Z" fill="#3a2a24"/><path d="M12.600000000000001 17.26 A8.7 6.76 0 0 1 30.0 17.26 A8.7 10.14 0 0 1 12.600000000000001 17.26 Z" fill="#e6ba9e"/><path d="M12.100000000000001 14.5 C13.100000000000001 6.5 28.5 5.5 30.5 15.5 C27.5 10.0 21.3 8.5 12.100000000000001 14.5 Z" fill="#3a2a24"/><ellipse cx="17.6" cy="16.7" rx="1.7" ry="0.65" fill="#2a1a14" opacity=".55"/><ellipse cx="25.4" cy="16.7" rx="1.7" ry="0.65" fill="#2a1a14" opacity=".55"/><ellipse cx="21.6" cy="22.799999999999997" rx="2.3" ry="0.8" fill="#b0564e" opacity=".6"/><ellipse cx="21.6" cy="19.2" rx="1.1" ry="0.6" fill="#9a5a40" opacity=".35"/></g></g></svg>
<div class="nm">山口 翔</div><div class="cd">0040</div>
<div class="nb"><svg viewBox="0 0 18 18" width="18" height="18"><path d="M2.5 3.7a1.2 1.2 0 0 1 1.2-1.2h10.6a1.2 1.2 0 0 1 1.2 1.2v7.6l-4.2 4.2H3.7a1.2 1.2 0 0 1-1.2-1.2z" fill="none" stroke="#7a8ea7" stroke-width="2" stroke-linejoin="round"/><path d="M5.9 6.9h5.7M5.9 10.7h3.9" stroke="#7a8ea7" stroke-width="1.6" fill="none" stroke-linecap="round"/><path d="M11.2 15.4v-3a1.2 1.2 0 0 1 1.2-1.2h3" fill="none" stroke="#7a8ea7" stroke-width="1.6"/></svg></div>
<div class="st g">公開中</div>
<div class="lu">25日前</div>
<div class="ck x" style="left:695.9px"><svg viewBox="0 0 26 26" width="26" height="26"><path d="M7.4 13.2l4.1 3.9 7.1-7.7" fill="none" stroke="#c6c6c6" stroke-width="1.8"/></svg></div>
<div class="ck x" style="left:836.15px"><svg viewBox="0 0 26 26" width="26" height="26"><path d="M7.4 13.2l4.1 3.9 7.1-7.7" fill="none" stroke="#c6c6c6" stroke-width="1.8"/></svg></div>
<div class="ck x" style="left:976.4px"><svg viewBox="0 0 26 26" width="26" height="26"><path d="M7.4 13.2l4.1 3.9 7.1-7.7" fill="none" stroke="#c6c6c6" stroke-width="1.8"/></svg></div>
<div class="ck x" style="left:1116.65px"><svg viewBox="0 0 26 26" width="26" height="26"><path d="M7.4 13.2l4.1 3.9 7.1-7.7" fill="none" stroke="#c6c6c6" stroke-width="1.8"/></svg></div>
<div class="ck x" style="left:1256.9px"><svg viewBox="0 0 26 26" width="26" height="26"><path d="M7.4 13.2l4.1 3.9 7.1-7.7" fill="none" stroke="#c6c6c6" stroke-width="1.8"/></svg></div>
<div class="ck x" style="left:1397.15px"><svg viewBox="0 0 26 26" width="26" height="26"><path d="M7.4 13.2l4.1 3.9 7.1-7.7" fill="none" stroke="#c6c6c6" stroke-width="1.8"/></svg></div>
</div>
<div class="row" style="top:630.65px">
<div class="cb off" style="top:20px"></div>
<svg class="av" viewBox="0 0 43 43" width="43" height="43"><defs><clipPath id="c7"><circle cx="21.5" cy="21.5" r="21.4"/></clipPath><filter id="b7" x="-10%" y="-10%" width="120%" height="120%"><feGaussianBlur stdDeviation="0.55"/></filter></defs><g clip-path="url(#c7)"><rect width="43" height="43" fill="#ffffff"/><g filter="url(#b7)"><path d="M10.3 31 C12.3 19 12.700000000000001 10.6 13.700000000000001 8.6 C15.200000000000001 1.1 28.4 1.1 29.9 8.6 C30.9 12.6 32.2 19 33.2 31 Z" fill="#3a2e2e"/><path d="M-2.5 37.7 L3.5 33.2 L14.5 27.4 L27.3 27.4 L39.4 33.2 L45.4 37.7 L44 44 L-1 44 Z" fill="#2c2c2e"/><path d="M15.3 26.9 L26.5 26.9 L23.400000000000002 44 L20.2 44 Z" fill="#f8f8f8"/><path d="M17.200000000000003 20.2 L26.4 20.2 L26.200000000000003 27.9 L21.8 31.9 L17.4 27.9 Z" fill="#f0d2c2"/><path d="M17.200000000000003 23.2 L26.4 23.2 L25.2 28.0 L18.400000000000002 28.0 Z" fill="#000" opacity=".13"/><path d="M15.10 16.5 C13.60 14.5 13.80 14.0 13.80 13.0 A8.0 10.40 0 0 1 29.80 13.0 C29.80 14.0 30.00 14.5 28.50 16.5 Z" fill="#3a2e2e"/><path d="M14.700000000000001 16.18 A7.1 6.68 0 0 1 28.9 16.18 A7.1 10.02 0 0 1 14.700000000000001 16.18 Z" fill="#f0d2c2"/><path d="M14.200000000000001 13.5 C15.200000000000001 5.5 27.4 4.5 29.4 14.5 C26.4 9.0 21.8 7.5 14.200000000000001 13.5 Z" fill="#3a2e2e"/><ellipse cx="18.1" cy="15.7" rx="1.7" ry="0.65" fill="#2a1a14" opacity=".55"/><ellipse cx="25.9" cy="15.7" rx="1.7" ry="0.65" fill="#2a1a14" opacity=".55"/><ellipse cx="22.1" cy="21.6" rx="2.3" ry="0.8" fill="#b0564e" opacity=".6"/><ellipse cx="22.1" cy="18.0" rx="1.1" ry="0.6" fill="#9a5a40" opacity=".35"/></g></g></svg>
<div class="nm">後藤 愛</div><div class="cd">0060</div>
<div class="nb"><svg viewBox="0 0 18 18" width="18" height="18"><path d="M2.5 3.7a1.2 1.2 0 0 1 1.2-1.2h10.6a1.2 1.2 0 0 1 1.2 1.2v7.6l-4.2 4.2H3.7a1.2 1.2 0 0 1-1.2-1.2z" fill="none" stroke="#7a8ea7" stroke-width="2" stroke-linejoin="round"/><path d="M5.9 6.9h5.7M5.9 10.7h3.9" stroke="#7a8ea7" stroke-width="1.6" fill="none" stroke-linecap="round"/><path d="M11.2 15.4v-3a1.2 1.2 0 0 1 1.2-1.2h3" fill="none" stroke="#7a8ea7" stroke-width="1.6"/></svg></div>
<div class="st g">公開中</div>
<div class="lu">3か月前</div>
<div class="ck x" style="left:695.9px"><svg viewBox="0 0 26 26" width="26" height="26"><path d="M7.4 13.2l4.1 3.9 7.1-7.7" fill="none" stroke="#c6c6c6" stroke-width="1.8"/></svg></div>
<div class="ck x" style="left:836.15px"><svg viewBox="0 0 26 26" width="26" height="26"><path d="M7.4 13.2l4.1 3.9 7.1-7.7" fill="none" stroke="#c6c6c6" stroke-width="1.8"/></svg></div>
<div class="ck x" style="left:976.4px"><svg viewBox="0 0 26 26" width="26" height="26"><path d="M7.4 13.2l4.1 3.9 7.1-7.7" fill="none" stroke="#c6c6c6" stroke-width="1.8"/></svg></div>
<div class="ck x" style="left:1116.65px"><svg viewBox="0 0 26 26" width="26" height="26"><path d="M7.4 13.2l4.1 3.9 7.1-7.7" fill="none" stroke="#c6c6c6" stroke-width="1.8"/></svg></div>
<div class="ck x" style="left:1256.9px"><svg viewBox="0 0 26 26" width="26" height="26"><path d="M7.4 13.2l4.1 3.9 7.1-7.7" fill="none" stroke="#c6c6c6" stroke-width="1.8"/></svg></div>
<div class="ck x" style="left:1397.15px"><svg viewBox="0 0 26 26" width="26" height="26"><path d="M7.4 13.2l4.1 3.9 7.1-7.7" fill="none" stroke="#c6c6c6" stroke-width="1.8"/></svg></div>
</div>
</div>
<div id="bar">
<div class="abs" style="right:275px;top:10px;font-size:12.85px;font-weight:700;line-height:18px;white-space:nowrap;color:#222">レジュメ一括作成の利用状況</div>
<div class="abs" style="left:1155px;top:32px;width:98.5px;height:21.5px;border-radius:11px;background:#e8f2fe;color:#3d86ea;font-size:13px;font-weight:700;line-height:22.3px;text-align:center;white-space:nowrap;letter-spacing:.3px;padding-left:1px">残り19,941回</div>
<div class="abs" style="left:1271px;top:18px;width:1px;height:27px;background:#e0e4ea"></div>
<div class="abs" style="left:1290px;top:20px;font-size:15px;line-height:24px;white-space:nowrap;color:#222">3件を選択中</div>
<div class="abs" style="left:1391px;top:9.3px;width:125px;height:43px;border-radius:4px;background:#2c63c2;color:#fff;font-weight:700;font-size:15px;line-height:43px;padding-left:17px;white-space:nowrap">一括操作<svg class="abs" style="left:91px;top:14px" width="16" height="16" viewBox="0 0 16 16"><path d="M2.6 5.4l5.4 5.4 5.4-5.4" fill="none" stroke="#fff" stroke-width="2.3"/></svg></div>
</div>
<div id="dd">
<div class="mi" style="top:4.5px;background:#f3f5f7">レジュメを作成して公開</div>
<div class="mi" style="top:47.5px;height:61.5px;line-height:20px"><div class="abs" style="left:18px;top:9.7px;line-height:22px">レジュメを最新にする</div><div class="abs" style="left:172px;top:10.5px;width:37.5px;height:21.5px;border-radius:11px;background:#f3f5f7;color:#617b99;font-size:13px;font-weight:700;line-height:22.6px;text-align:center">2件</div><div class="abs" style="left:17px;top:33.7px;font-size:13px;line-height:18px;color:#999">新しい情報のあるレジュメのみ更新</div></div>
<div class="mi" style="top:109.5px">下書きを作成</div>
<div class="mi" style="top:152.5px">公開する</div>
<div class="mi" style="top:195.5px">非公開にする</div>
<div class="mi" style="top:238.5px;color:#e6504b">削除</div>
</div>
</div></body></html>
